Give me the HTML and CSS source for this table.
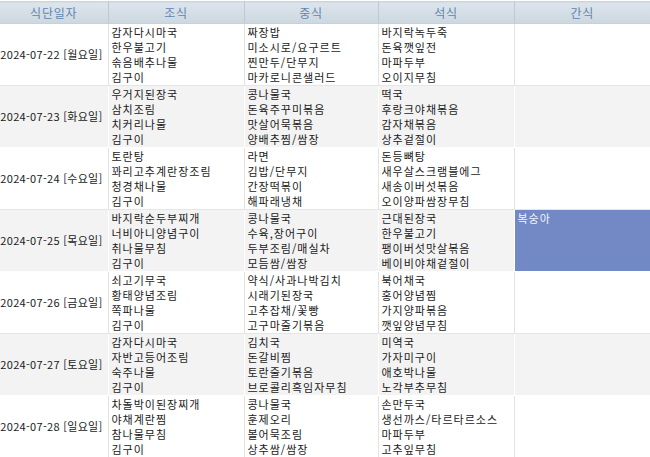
FILE: index.html
```html
<!DOCTYPE html>
<html lang="ko">
<head>
<meta charset="utf-8">
<link rel="stylesheet" href="styles.css">
</head>
<body>
<table class="menu">
  <colgroup>
    <col class="c-date"><col class="c-meal"><col class="c-meal2"><col class="c-meal"><col class="c-meal">
  </colgroup>
  <thead>
    <tr><th>식단일자</th><th>조식</th><th>중식</th><th>석식</th><th>간식</th></tr>
  </thead>
  <tbody>
    <tr>
      <td class="date">2024-07-22 [월요일]</td>
      <td>감자다시마국<br>한우불고기<br>솎음배추나물<br>김구이</td>
      <td>짜장밥<br>미소시로/요구르트<br>찐만두/단무지<br>마카로니콘샐러드</td>
      <td>바지락녹두죽<br>돈육깻잎전<br>마파두부<br>오이지무침</td>
      <td></td>
    </tr>
    <tr class="alt">
      <td class="date">2024-07-23 [화요일]</td>
      <td>우거지된장국<br>삼치조림<br>치커리나물<br>김구이</td>
      <td>콩나물국<br>돈육주꾸미볶음<br>맛살어묵볶음<br>양배추찜/쌈장</td>
      <td>떡국<br>후랑크야채볶음<br>감자채볶음<br>상추겉절이</td>
      <td></td>
    </tr>
    <tr>
      <td class="date">2024-07-24 [수요일]</td>
      <td>토란탕<br>꽈리고추계란장조림<br>청경채나물<br>김구이</td>
      <td>라면<br>김밥/단무지<br>간장떡볶이<br>해파래냉채</td>
      <td>돈등뼈탕<br>새우살스크램블에그<br>새송이버섯볶음<br>오이양파쌈장무침</td>
      <td></td>
    </tr>
    <tr class="alt">
      <td class="date">2024-07-25 [목요일]</td>
      <td>바지락순두부찌개<br>너비아니양념구이<br>취나물무침<br>김구이</td>
      <td>콩나물국<br>수육,장어구이<br>두부조림/매실차<br>모듬쌈/쌈장</td>
      <td>근대된장국<br>한우불고기<br>팽이버섯맛살볶음<br>베이비야채겉절이</td>
      <td class="snack">복숭아</td>
    </tr>
    <tr>
      <td class="date">2024-07-26 [금요일]</td>
      <td>쇠고기무국<br>황태양념조림<br>쪽파나물<br>김구이</td>
      <td>약식/사과나박김치<br>시래기된장국<br>고추잡채/꽃빵<br>고구마줄기볶음</td>
      <td>북어채국<br>홍어양념찜<br>가지양파볶음<br>깻잎양념무침</td>
      <td></td>
    </tr>
    <tr class="alt">
      <td class="date">2024-07-27 [토요일]</td>
      <td>감자다시마국<br>자반고등어조림<br>숙주나물<br>김구이</td>
      <td>김치국<br>돈갈비찜<br>토란줄기볶음<br>브로콜리흑임자무침</td>
      <td>미역국<br>가자미구이<br>애호박나물<br>노각부추무침</td>
      <td></td>
    </tr>
    <tr>
      <td class="date">2024-07-28 [일요일]</td>
      <td>차돌박이된장찌개<br>야채계란찜<br>참나물무침<br>김구이</td>
      <td>콩나물국<br>훈제오리<br>볼어묵조림<br>상추쌈/쌈장</td>
      <td>손만두국<br>생선까스/타르타르소스<br>마파두부<br>고추잎무침</td>
      <td></td>
    </tr>
  </tbody>
</table>
</body>
</html>
```

FILE: styles.css
```css
html, body {
  margin: 0;
  padding: 0;
  background: #ffffff;
}

body {
  font-family: "Noto Sans CJK KR", "Noto Sans", sans-serif;
  font-size: 11px;
  letter-spacing: 1px;
  color: #1a1a1a;
}

.menu {
  width: 650px;
  margin-top: 1px;
  border-collapse: collapse;
  table-layout: fixed;
  border-bottom: 1px solid #d4d4d4;
}

.c-date { width: 108px; }
.c-meal { width: 136px; }
.c-meal2 { width: 134px; }

.menu th {
  height: 21px;
  padding: 0;
  font-weight: normal;
  font-size: 12px;
  letter-spacing: 0.8px;
  color: #5f86b3;
  text-align: center;
  background: linear-gradient(#dde5ec, #ccd7df);
  border-top: 1px solid #cdd3d8;
  border-left: 1px solid #f4f6f8;
  border-right: 1px solid #bfc9d1;
  border-bottom: 1px solid #c9d1d8;
}

.menu th:first-child { border-left: none; }
.menu th:last-child { border-right: none; }

.menu td {
  height: 60px;
  padding: 1px 2px 0 3px;
  line-height: 15px;
  vertical-align: top;
  white-space: nowrap;
  overflow: hidden;
  border-right: 1px solid #e3e3e3;
  border-bottom: 1px solid #e6e6e6;
}

.menu td:last-child { border-right: none; }

.menu tr.alt td {
  background: #f3f3f3;
  border-right-color: #ffffff;
  border-bottom-color: #ffffff;
}

.menu td.date {
  vertical-align: middle;
  text-align: right;
  padding: 0 5px 0 0;
  letter-spacing: 0.3px;
}

.menu tr.alt td.snack {
  background: #7289c6;
  color: #f2f4fa;
}
```
